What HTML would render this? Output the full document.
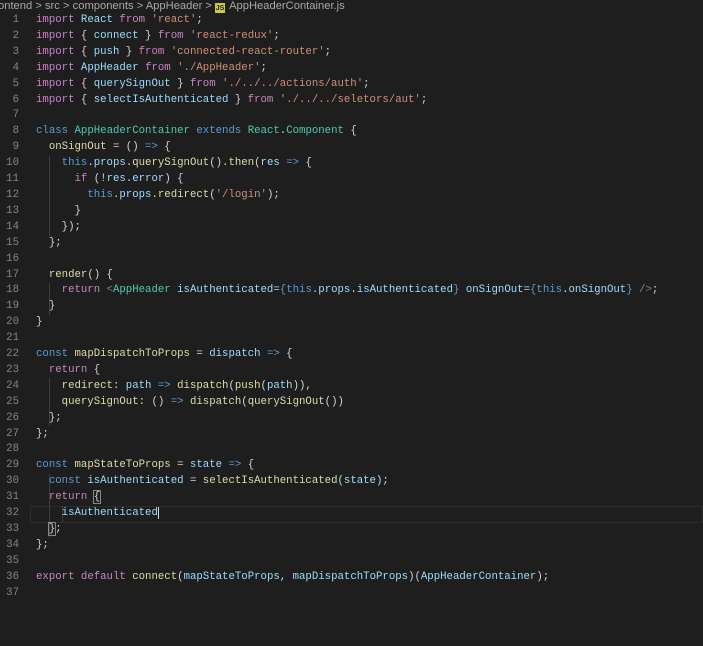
<!DOCTYPE html>
<html><head><meta charset="utf-8"><style>
body{margin:0;width:703px;height:646px;background:#1e1e1e;overflow:hidden;position:relative;font-family:"Liberation Mono",monospace;}
.bc{position:absolute;left:-2px;top:0px;height:14px;font:11.2px "Liberation Sans","DejaVu Sans",sans-serif;color:#a8a8a8;white-space:nowrap;}
.js{display:inline-block;background:#cbcb41;color:#1e1e1e;font-size:7px;font-weight:bold;width:10px;height:10px;line-height:12px;text-align:center;vertical-align:-1px;margin-right:4px}
.ln,.tx{position:absolute;top:13px;font-size:10.7px;line-height:15.9px;white-space:pre;}
.ln{left:0;width:19px;text-align:right;color:#858585;}
.tx{left:36px;color:#d4d4d4;}
.k{color:#c586c0}.b{color:#569cd6}.v{color:#9cdcfe}.f{color:#dcdcaa}.s{color:#ce9178}.c{color:#4ec9b0}
.cur{position:absolute;left:30px;right:0;top:506px;height:15px;border:1px solid #2c2c2c;}
.g{position:absolute;width:1px;background:#404040;}
</style></head><body>
<div class="bc">ontend &gt; src &gt; components &gt; AppHeader &gt; <span class="js">JS</span>AppHeaderContainer.js</div>
<div class="cur"></div>
<div class="g" style="left:49px;top:156px;height:80px"></div>
<div class="g" style="left:49px;top:283px;height:32px"></div>
<div class="g" style="left:49px;top:378px;height:48px"></div>
<div class="g" style="left:49px;top:474px;height:64px"></div>
<div class="g" style="left:62px;top:506px;height:16px"></div>
<div class="ln">1
2
3
4
5
6
7
8
9
10
11
12
13
14
15
16
17
18
19
20
21
22
23
24
25
26
27
28
29
30
31
32
33
34
35
36
37</div>
<div class="tx"><span class="k">import</span> <span class="v">React</span> <span class="k">from</span> <span class="s">'react'</span>;
<span class="k">import</span> { <span class="v">connect</span> } <span class="k">from</span> <span class="s">'react-redux'</span>;
<span class="k">import</span> { <span class="v">push</span> } <span class="k">from</span> <span class="s">'connected-react-router'</span>;
<span class="k">import</span> <span class="v">AppHeader</span> <span class="k">from</span> <span class="s">'./AppHeader'</span>;
<span class="k">import</span> { <span class="v">querySignOut</span> } <span class="k">from</span> <span class="s">'./../../actions/auth'</span>;
<span class="k">import</span> { <span class="v">selectIsAuthenticated</span> } <span class="k">from</span> <span class="s">'./../../seletors/aut'</span>;

<span class="b">class</span> <span class="c">AppHeaderContainer</span> <span class="b">extends</span> <span class="c">React</span>.<span class="c">Component</span> {
  <span class="f">onSignOut</span> = () <span class="b">=&gt;</span> {
    <span class="b">this</span>.<span class="v">props</span>.<span class="f">querySignOut</span>().<span class="f">then</span>(<span class="v">res</span> <span class="b">=&gt;</span> {
      <span class="k">if</span> (!<span class="v">res</span>.<span class="v">error</span>) {
        <span class="b">this</span>.<span class="v">props</span>.<span class="f">redirect</span>(<span class="s">'/login'</span>);
      }
    });
  };

  <span class="f">render</span>() {
    <span class="k">return</span> <span style="color:#808080">&lt;</span><span class="c">AppHeader</span> <span class="v">isAuthenticated</span>=<span class="b">{</span><span class="b">this</span>.<span class="v">props</span>.<span class="v">isAuthenticated</span><span class="b">}</span> <span class="v">onSignOut</span>=<span class="b">{</span><span class="b">this</span>.<span class="v">onSignOut</span><span class="b">}</span> <span style="color:#808080">/&gt;</span>;
  }
}

<span class="b">const</span> <span class="f">mapDispatchToProps</span> = <span class="v">dispatch</span> <span class="b">=&gt;</span> {
  <span class="k">return</span> {
    <span class="f">redirect</span>: <span class="v">path</span> <span class="b">=&gt;</span> <span class="f">dispatch</span>(<span class="f">push</span>(<span class="v">path</span>)),
    <span class="f">querySignOut</span>: () <span class="b">=&gt;</span> <span class="f">dispatch</span>(<span class="f">querySignOut</span>())
  };
};

<span class="b">const</span> <span class="f">mapStateToProps</span> = <span class="v">state</span> <span class="b">=&gt;</span> {
  <span class="b">const</span> <span class="v">isAuthenticated</span> = <span class="f">selectIsAuthenticated</span>(<span class="v">state</span>);
  <span class="k">return</span> <span style="outline:1px solid #888">{</span>
    <span class="v">isAuthenticated</span><span style="border-left:1px solid #ddd"></span>
  <span style="outline:1px solid #888">}</span>;
};

<span class="k">export</span> <span class="k">default</span> <span class="f">connect</span>(<span class="v">mapStateToProps</span>, <span class="v">mapDispatchToProps</span>)(<span class="v">AppHeaderContainer</span>);
</div>
</body></html>
